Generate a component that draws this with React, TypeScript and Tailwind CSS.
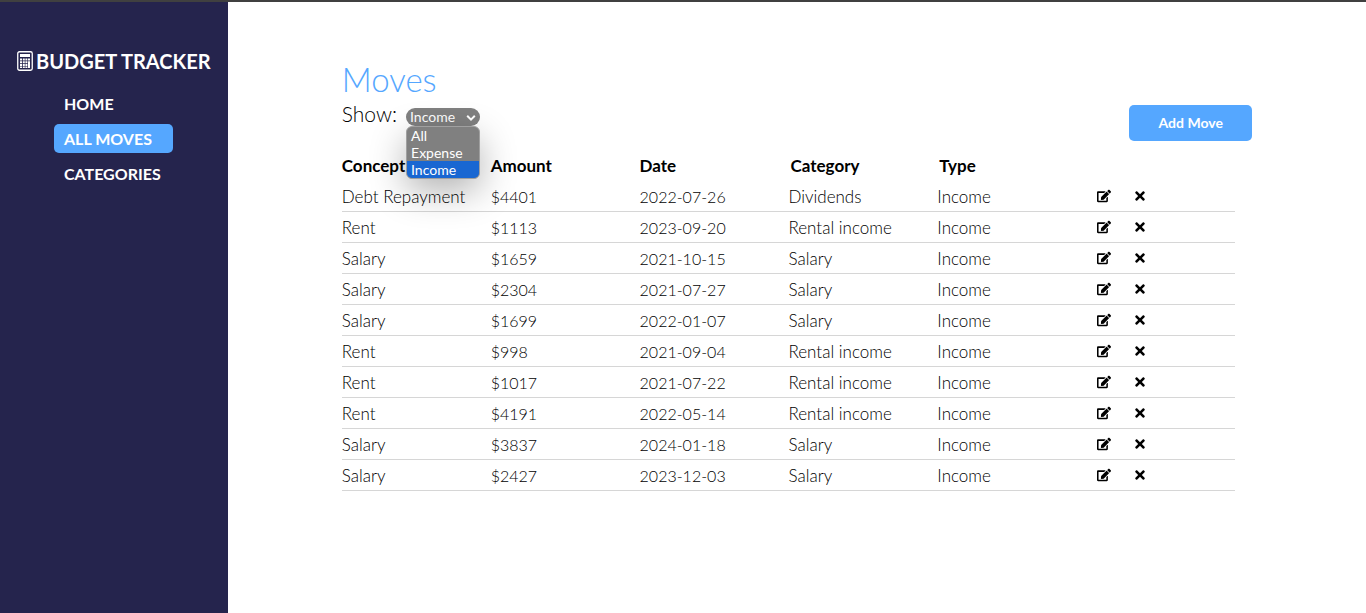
import { useState } from "react";
import { FaEdit, FaTimes } from "react-icons/fa";

type Move = { concept: string; amount: number; date: string; category: string };

const moves: Move[] = [
  { concept: "Debt Repayment", amount: 4401, date: "2022-07-26", category: "Dividends" },
  { concept: "Rent", amount: 1113, date: "2023-09-20", category: "Rental income" },
  { concept: "Salary", amount: 1659, date: "2021-10-15", category: "Salary" },
  { concept: "Salary", amount: 2304, date: "2021-07-27", category: "Salary" },
  { concept: "Salary", amount: 1699, date: "2022-01-07", category: "Salary" },
  { concept: "Rent", amount: 998, date: "2021-09-04", category: "Rental income" },
  { concept: "Rent", amount: 1017, date: "2021-07-22", category: "Rental income" },
  { concept: "Rent", amount: 4191, date: "2022-05-14", category: "Rental income" },
  { concept: "Salary", amount: 3837, date: "2024-01-18", category: "Salary" },
  { concept: "Salary", amount: 2427, date: "2023-12-03", category: "Salary" },
];

const filters = ["All", "Expense", "Income"];

function CalculatorIcon() {
  return (
    <svg className="h-5 w-4 shrink-0" viewBox="0 0 16 20" fill="none" aria-hidden="true">
      <rect x="0.75" y="0.75" width="14.5" height="18.5" rx="1.75" stroke="white" strokeWidth="1.3" />
      <path
        fill="white"
        d="M3 3h10v3H3zM3 7.5h2v2H3zM5.8 7.5h2v2h-2zM8.4 7.5h2v2h-2zM11 7.5h2v2h-2zM3 10.3h2v2H3zM5.8 10.3h2v2h-2zM8.4 10.3h2v2h-2zM3 13h2v2H3zM5.8 13h2v2h-2zM8.4 13h2v2h-2zM11 10.3h2V17h-2zM3 15.6h2V17H3zM5.8 15.6h2V17h-2zM8.4 15.6h2V17h-2z"
      />
    </svg>
  );
}

function Sidebar() {
  return (
    <aside className="w-[228px] shrink-0 bg-[#25244d] pt-[47px] font-bold text-white">
      <div className="flex items-center gap-[3px] pl-[17px] text-xl leading-6 whitespace-nowrap">
        <CalculatorIcon />
        <span>BUDGET TRACKER</span>
      </div>
      <nav className="mt-4 ml-[54px] flex w-[119px] flex-col gap-1.5 text-base leading-[29px]">
        <a href="#home" className="px-2.5">HOME</a>
        <a href="#moves" aria-current="page" className="rounded-[5px] bg-[#55a7ff] px-2.5">ALL MOVES</a>
        <a href="#categories" className="px-2.5">CATEGORIES</a>
      </nav>
    </aside>
  );
}

function ShowFilter() {
  const [value, setValue] = useState("Income");
  return (
    <div className="flex items-center gap-[9px] pt-[3px]">
      <label htmlFor="show" className="text-[21px] leading-6 font-light">Show:</label>
      <div className="relative mt-1.5 text-sm font-normal text-white">
        <select
          id="show"
          value={value}
          onChange={(e) => setValue(e.target.value)}
          className="block h-[18px] w-[74px] appearance-none rounded-full bg-[#808080] pl-1 leading-[18px]"
        >
          {filters.map((f) => (
            <option key={f}>{f}</option>
          ))}
        </select>
        <svg className="pointer-events-none absolute top-1.5 right-1 h-2 w-2.5" viewBox="0 0 10 8" fill="none" aria-hidden="true">
          <path d="M1.2 1.8 5 5.6l3.8-3.8" stroke="white" strokeWidth="2" />
        </svg>
        <ul
          role="listbox"
          aria-label="Show"
          className="absolute top-full left-0 z-10 w-[74px] overflow-hidden rounded-md border border-[#a0a0a0] bg-[#808080] leading-[17px] shadow-[0_12px_36px_rgba(0,0,0,0.3)]"
        >
          {filters.map((f) => (
            <li
              key={f}
              role="option"
              aria-selected={f === value}
              onClick={() => setValue(f)}
              className="pl-1 aria-selected:bg-[#1967d2]"
            >
              {f}
            </li>
          ))}
        </ul>
      </div>
    </div>
  );
}

function MovesTable() {
  return (
    <table className="w-full table-fixed border-collapse text-left text-[17px]">
      <thead>
        <tr className="leading-[30px] font-bold">
          <th>Concept</th>
          <th>Amount</th>
          <th>Date</th>
          <th className="pl-0.5">Category</th>
          <th className="pl-0.5">Type</th>
          <th aria-label="Actions" />
        </tr>
      </thead>
      <tbody className="leading-7 font-light">
        {moves.map((m) => (
          <tr key={m.date} className="border-b border-[#d6d6d6]">
            <td className="pt-0.5 whitespace-nowrap">{m.concept}</td>
            <td className="pt-0.5 text-base leading-7">${m.amount}</td>
            <td className="pt-0.5 text-base leading-7">{m.date}</td>
            <td className="pt-0.5">{m.category}</td>
            <td className="pt-0.5">Income</td>
            <td>
              <div className="flex h-[30px] items-center gap-[22px] pl-[11px] text-sm">
                <button type="button" aria-label="Edit"><FaEdit /></button>
                <button type="button" aria-label="Delete"><FaTimes /></button>
              </div>
            </td>
          </tr>
        ))}
      </tbody>
    </table>
  );
}

export default function App() {
  return (
    <div className="flex min-h-screen flex-col border-t-2 border-[#404040] bg-white font-['Lato',sans-serif] text-black">
      <div className="flex grow">
        <Sidebar />
        <main className="grow">
          <div className="px-[10%] pt-[57px]">
            <h1 className="text-[33px] leading-10 font-light text-[#55a7ff]">Moves</h1>
            <div className="flex items-start justify-between">
              <ShowFilter />
              <button
                type="button"
                className="mt-1.5 h-9 w-[123px] rounded-[5px] bg-[#55a7ff] text-sm font-bold text-white"
              >
                Add Move
              </button>
            </div>
            <div className="mt-2.5 pr-[17px]">
              <MovesTable />
            </div>
          </div>
        </main>
      </div>
    </div>
  );
}
